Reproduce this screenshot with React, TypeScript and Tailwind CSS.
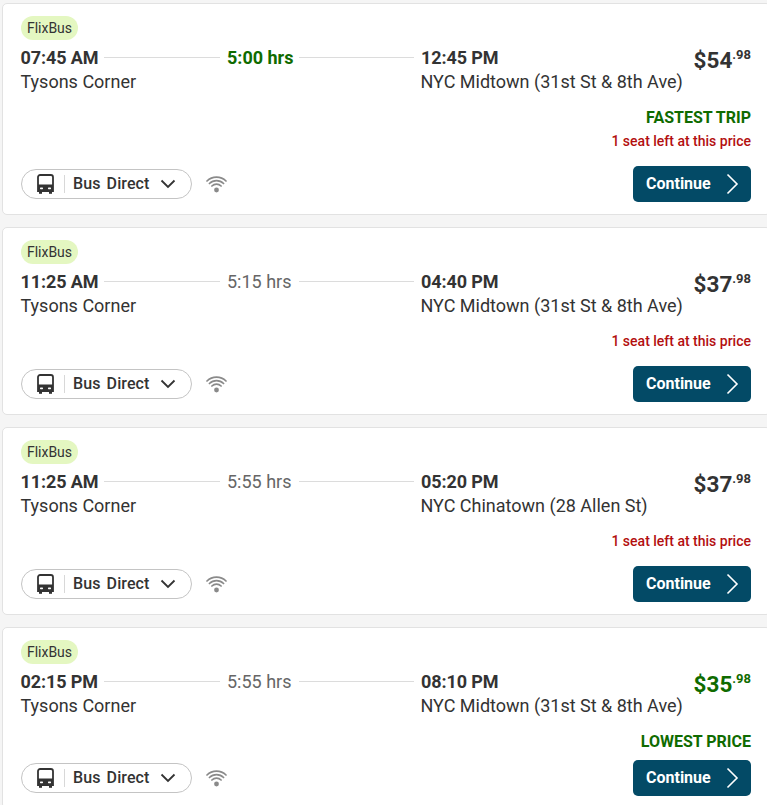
const trips = [
  { dep: "07:45 AM", dur: "5:00 hrs", arr: "12:45 PM", to: "NYC Midtown (31st St & 8th Ave)", price: "54", tag: "FASTEST TRIP", seat: true, fast: true, low: false },
  { dep: "11:25 AM", dur: "5:15 hrs", arr: "04:40 PM", to: "NYC Midtown (31st St & 8th Ave)", price: "37", tag: "", seat: true, fast: false, low: false },
  { dep: "11:25 AM", dur: "5:55 hrs", arr: "05:20 PM", to: "NYC Chinatown (28 Allen St)", price: "37", tag: "", seat: true, fast: false, low: false },
  { dep: "02:15 PM", dur: "5:55 hrs", arr: "08:10 PM", to: "NYC Midtown (31st St & 8th Ave)", price: "35", tag: "LOWEST PRICE", seat: false, fast: false, low: true },
];

function BusIcon() {
  return (
    <svg width="18" height="21" viewBox="0 0 18 21" fill="none">
      <path d="M3.2 1h10.6A2.2 2.2 0 0 1 16 3.2V17H1V3.2A2.2 2.2 0 0 1 3.2 1Z" stroke="#333" strokeWidth="1.8" />
      <rect x="1" y="10.5" width="15" height="7.5" fill="#333" />
      <rect x="3" y="13.5" width="3" height="1.7" rx="0.6" fill="#fff" />
      <rect x="11" y="13.5" width="3" height="1.7" rx="0.6" fill="#fff" />
      <rect x="2" y="18" width="3" height="1.8" fill="#333" />
      <rect x="12" y="18" width="3" height="1.8" fill="#333" />
    </svg>
  );
}

function WifiIcon() {
  return (
    <svg width="21" height="18" viewBox="0 0 21 18" fill="none" stroke="#8a8a8a" strokeWidth="1.7" strokeLinecap="round">
      <path d="M1 6C6.2 .9 14.8 .9 20 6" />
      <path d="M3.4 8.5C7.4 4.6 13.6 4.6 17.6 8.5" />
      <path d="M5.9 11C8.5 8.4 12.5 8.4 15.1 11" />
      <circle cx="10.5" cy="15" r="2.4" fill="#8a8a8a" stroke="none" />
    </svg>
  );
}

function Trip({ t }: { t: (typeof trips)[number] }) {
  return (
    <div className="bg-white border border-[#e2e2e2] rounded-[5px] ml-[2px] mr-[-4px] pl-[18px] pr-[19px] pt-[12px] pb-[12px] text-[#333]">
      <div className="h-[24px] w-[57px] rounded-[12px] bg-[#e4f7c1] flex items-center justify-center text-[14px] text-[#333]">FlixBus</div>
      <div className="flex items-start h-[65px]">
        <div className="w-[400px] shrink-0 ml-[-0.5px]">
          <div className="grid grid-cols-[199.5px_65px_115px_auto] gap-x-[7px] items-center h-[34px] pt-px">
            <div className="flex items-center">
              <span className="text-[18px] font-bold leading-[24px] whitespace-nowrap tracking-[-0.1px]">{t.dep}</span>
              <span className="flex-1 h-px bg-[#dcdcdc] ml-[6px]"></span>
            </div>
            <span className={t.fast ? "text-[18px] font-bold text-[#0f6b00] whitespace-nowrap" : "text-[18px] text-[#666] whitespace-nowrap"}>{t.dur}</span>
            <span className="h-px bg-[#dcdcdc]"></span>
            <span className="text-[18px] font-bold leading-[24px] whitespace-nowrap tracking-[-0.1px]">{t.arr}</span>
          </div>
          <div className="grid grid-cols-[400px_auto] h-[24px] text-[18px] leading-[24px] mt-[-4px] whitespace-nowrap">
            <span>Tysons Corner</span>
            <span>{t.to}</span>
          </div>
        </div>
        <div className="flex-1 flex justify-end mt-[5px]">
          <div className={t.low ? "flex items-start text-[#0f6b00] font-bold" : "flex items-start text-[#333] font-bold"}>
            <span className="text-[22.5px] leading-[30px]">${t.price}</span>
            <span className="text-[13px] leading-[18px] mt-px">.98</span>
          </div>
        </div>
      </div>
      <div className="flex flex-col items-end">
        {t.tag && (
          <div className={t.low ? "h-[24px] mb-[7px] pt-px text-[16px] leading-[24px] font-bold text-[#0f6b00]" : "h-[24px] pt-px text-[16px] leading-[24px] font-bold text-[#0f6b00]"}>{t.tag}</div>
        )}
        {t.seat && <div className="h-[24px] mb-[13px] text-[14px] leading-[24px] font-medium text-[#b30f0f]">1 seat left at this price</div>}
      </div>
      <div className="flex items-center justify-between h-[36px]">
        <div className="flex items-center gap-[14px]">
          <div className="flex items-center h-[30px] w-[171px] rounded-[15px] border border-[#c4c4c4] pl-[15px]">
            <BusIcon />
            <span className="w-px h-[18px] bg-[#d8d8d8] ml-[9px] mr-[8px]"></span>
            <span className="text-[16px] font-medium text-[#333] whitespace-nowrap tracking-[0.1px] [word-spacing:2px]">Bus Direct</span>
            <svg className="ml-[10px]" width="16" height="10" viewBox="0 0 16 10" fill="none" stroke="#333" strokeWidth="1.8"><path d="M1.5 1.5 8 8l6.5-6.5" /></svg>
          </div>
          <WifiIcon />
        </div>
        <div className="flex items-center h-[36px] w-[118px] rounded-[5px] bg-[#034a66] pl-[13px] text-white">
          <span className="text-[16px] font-bold">Continue</span>
          <svg className="ml-[15px]" width="13" height="22" viewBox="0 0 13 22" fill="none" stroke="#fff" strokeWidth="1.6"><path d="M1.5 1.5 11 11l-9.5 9.5" /></svg>
        </div>
      </div>
    </div>
  );
}

export default function App() {
  return (
    <div className="h-[805px] w-[767px] overflow-hidden bg-[#f5f5f5] pt-[3px] flex flex-col gap-[12px]" style={{ fontFamily: 'Roboto, sans-serif' }}>
      {trips.map((t, i) => (
        <Trip key={i} t={t} />
      ))}
    </div>
  );
}
